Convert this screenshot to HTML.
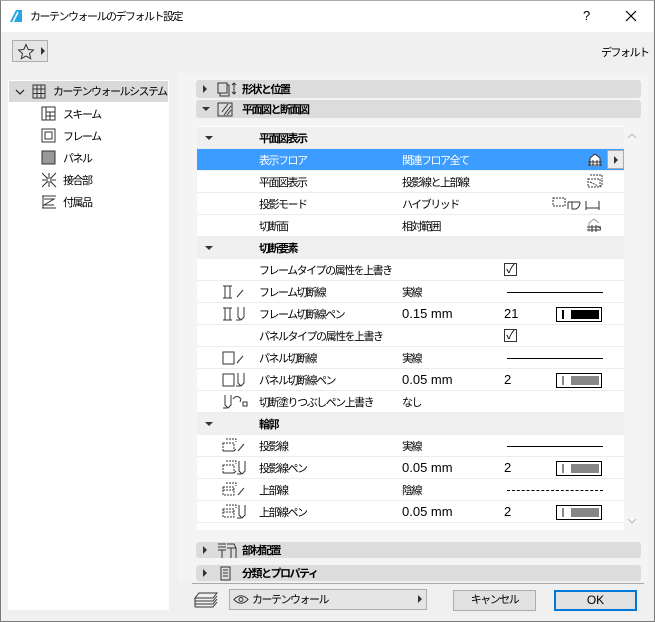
<!DOCTYPE html>
<html><head><meta charset="utf-8"><style>
*{margin:0;padding:0;box-sizing:border-box}
body{width:655px;height:622px;overflow:hidden;background:#f0f0f0;font-family:"Liberation Sans","Noto Sans CJK JP",sans-serif;font-size:11px;letter-spacing:-1.5px;color:#000;position:relative;white-space:nowrap}
.a{position:absolute}
.L{font-size:13px;letter-spacing:0}
.win{left:0;top:0;width:655px;height:622px;border:1px solid #7a7a7a;border-top:1px solid #aaa}
.title{left:1px;top:1px;width:652px;height:31px;background:#fff}
.sec{left:196px;width:445px;height:18px;background:#dcdcdc;border-radius:3px;font-weight:bold}
.sec span{position:absolute;top:2px}
.row{left:197px;width:427px;height:22px;background:#fff;border-bottom:1px solid #ececec}
.row.h{background:#f0f0f0;font-weight:bold}
.row.sel{background:#3c9cff;color:#fff}
.row span{position:absolute;top:3px}
.row span.L{top:3px}
.c1{left:62px}.c2{left:205px}.c3{left:307px}
.sw{position:absolute;left:359px;top:4px;width:46px;height:15px;border:1px solid #000;background:#fff}
.sw i{position:absolute;left:5px;top:2px;width:2px;height:9px;background:#888}
.sw b{position:absolute;left:14px;top:2px;width:28px;height:9px;background:#878787}
.ln{position:absolute;left:310px;top:11px;width:96px;border-top:1px solid #000}
.chk{position:absolute;left:307px;top:4px;width:13px;height:13px;border:1px solid #333;font-size:12px;line-height:11px;text-align:center;font-weight:normal;letter-spacing:0}
.tri{position:absolute;left:8px;top:9px;width:0;height:0;border-left:4px solid transparent;border-right:4px solid transparent;border-top:4px solid #333}
.trr{position:absolute;width:0;height:0;border-top:4px solid transparent;border-bottom:4px solid transparent;border-left:4px solid #333}
.ic{position:absolute;left:25px;top:3px}
.btn{background:#e1e1e1;border:1px solid #adadad;text-align:center;line-height:19px}
</style></head><body>
<div class="a win"></div>
<div class="a title"></div>
<svg class="a" style="left:9px;top:9px" width="14" height="14"><path d="M1 13 L7 1 L13 1 L13 13 Z" fill="#29a6e0"/><path d="M4 13 L9 3" stroke="#fff" stroke-width="1.5"/></svg>
<div class="a" style="left:30px;top:8px">カーテンウォールのデフォルト設定</div>
<div class="a L" style="left:583px;top:8px">?</div>
<svg class="a" style="left:625px;top:10px" width="12" height="12"><path d="M1 1L11 11M11 1L1 11" stroke="#000" stroke-width="1.2"/></svg>
<div class="a" style="left:12px;top:40px;width:36px;height:22px;border:1px solid #adadad;background:#e5e5e5"></div>
<svg class="a" style="left:17px;top:43px" width="18" height="17"><path d="M9 1.5L11.2 6.5L16.5 7L12.5 10.5L13.7 15.7L9 13L4.3 15.7L5.5 10.5L1.5 7L6.8 6.5Z" fill="none" stroke="#333"/></svg>
<div class="a trr" style="left:41px;top:47px"></div>
<div class="a" style="left:601px;top:44px">デフォルト</div>
<div class="a" style="left:8px;top:80px;width:161px;height:530px;background:#fff"></div>
<div class="a" style="left:9px;top:81px;width:159px;height:21px;background:#d9d9d9"></div>
<svg class="a" style="left:15px;top:88px" width="10" height="8"><path d="M1 2L5 6L9 2" fill="none" stroke="#333" stroke-width="1.3"/></svg>
<svg class="a" style="left:31px;top:84px" width="16" height="15"><path d="M2 1H14V14H2ZM2 5H14M2 9.5H14M6 1V14M10 1V14" fill="none" stroke="#333"/></svg>
<div class="a" style="left:53px;top:83px">カーテンウォールシステム</div>
<svg class="a" style="left:41px;top:106px" width="15" height="15"><path d="M1 1H14V14H1ZM5 1V14M5 6H14M9 6V14M5 10H14" fill="none" stroke="#333"/></svg>
<div class="a" style="left:63px;top:106px">スキーム</div>
<svg class="a" style="left:41px;top:128px" width="15" height="15"><path d="M1 1H14V14H1ZM4 4H11V11H4Z" fill="none" stroke="#333"/></svg>
<div class="a" style="left:63px;top:128px">フレーム</div>
<svg class="a" style="left:41px;top:150px" width="15" height="15"><path d="M1 1H14V14H1Z" fill="#999" stroke="#333"/></svg>
<div class="a" style="left:63px;top:150px">パネル</div>
<svg class="a" style="left:41px;top:172px" width="16" height="16"><path d="M1 1L6 6M15 1L10 6M1 15L6 10M15 15L10 10M8 1V5M8 11V15M1 8H5M11 8H15" stroke="#333"/><rect x="6" y="6" width="4" height="4" fill="none" stroke="#333"/></svg>
<div class="a" style="left:63px;top:172px">接合部</div>
<svg class="a" style="left:41px;top:194px" width="16" height="16"><path d="M1 2H15M1 14H15M3 5H13L3 11H13M2 2V14" fill="none" stroke="#333"/></svg>
<div class="a" style="left:63px;top:194px">付属品</div>

<div class="a" style="left:178px;top:73px;width:470px;height:508px;background:#f4f4f4"></div>
<div class="a sec" style="top:80px"><div class="trr" style="left:7px;top:5px"></div>
<svg class="a" style="left:21px;top:1px" width="22" height="16"><path d="M1 2H10V12H1ZM3 12V15H12V4H10" fill="none" stroke="#333"/><path d="M17 2V13M15 4L17 2L19 4M15 11L17 13L19 11" fill="none" stroke="#333"/></svg>
<span style="left:46px;top:1px">形状と位置</span></div>
<div class="a sec" style="top:100px"><div class="tri" style="left:6px;top:7px"></div>
<svg class="a" style="left:21px;top:2px" width="18" height="16"><path d="M1 1H15V14H1Z" fill="none" stroke="#333"/><path d="M7 13L14 4M10 13L14 8M5 10L11 2" stroke="#333"/></svg>
<span style="left:46px;top:1px">平面図と断面図</span></div>

<div class="a" style="left:197px;top:126px;width:427px;height:404px;background:#fff"></div>
<div class="a row h" style="top:127px"><div class="tri"></div><span class="c1">平面図表示</span></div>
<div class="a row sel" style="top:149px"><span class="c1">表示フロア</span><span class="c2">関連フロア全て</span>
<svg class="a" style="left:391px;top:4px" width="14" height="14"><path d="M2 13V5L7 1L12 5V13" fill="#fff" stroke="#333"/><path d="M0 9H14M0 12H14M5 7V13M9 7V13" stroke="#333"/></svg>
<div class="a" style="left:410px;top:1px;width:17px;height:19px;background:#ececec;border:1px solid #aaa"><div class="trr" style="left:6px;top:5px"></div></div></div>
<div class="a row" style="top:171px"><span class="c1">平面図表示</span><span class="c2">投影線と上部線</span>
<svg class="a" style="left:390px;top:3px" width="16" height="15"><path d="M3 1H15V5M1 5H13V13H1ZM13 13L15 11V5M3 8L11 12" fill="none" stroke="#333" stroke-dasharray="2 1"/></svg></div>
<div class="a row" style="top:193px"><span class="c1">投影モード</span><span class="c2">ハイブリッド</span>
<svg class="a" style="left:355px;top:4px" width="52" height="14"><path d="M1 1H13V9H1Z" fill="none" stroke="#333" stroke-dasharray="2 1"/><path d="M16 5V12M16 5H28M20 5V12L24 12Q28 10 28 5M34 4V13M34 11H47M47 4V13" fill="none" stroke="#333"/></svg></div>
<div class="a row" style="top:215px"><span class="c1">切断面</span><span class="c2">相対範囲</span>
<svg class="a" style="left:390px;top:3px" width="16" height="15"><path d="M2 14V5L7 1L12 5" fill="none" stroke="#999"/><path d="M0 9H14M0 12H14M5 7V14M9 7V14M11 8L14 11" stroke="#333"/></svg></div>
<div class="a row h" style="top:237px"><div class="tri"></div><span class="c1">切断要素</span></div>
<div class="a row" style="top:259px"><span class="c1">フレームタイプの属性を上書き</span><div class="chk">✓</div></div>
<div class="a row" style="top:281px"><svg class="ic" width="32" height="16"><path d="M1 2H10M1 14H10M3 2V14M8 2V14M15 13L21 6" fill="none" stroke="#333"/></svg><span class="c1">フレーム切断線</span><span class="c2">実線</span><div class="ln"></div></div>
<div class="a row" style="top:303px"><svg class="ic" width="32" height="16"><path d="M1 2H10M1 14H10M3 2V14M8 2V14M16 1V11L19 14L22 11V1M14 14H18" fill="none" stroke="#333"/></svg><span class="c1">フレーム切断線ペン</span><span class="c2 L">0.15 mm</span><span class="c3 L">21</span><div class="sw"><i style="background:#000"></i><b style="background:#000"></b></div></div>
<div class="a row" style="top:325px"><span class="c1">パネルタイプの属性を上書き</span><div class="chk">✓</div></div>
<div class="a row" style="top:347px"><svg class="ic" width="32" height="16"><path d="M1 2H12V14H1ZM15 13L21 6" fill="none" stroke="#333"/></svg><span class="c1">パネル切断線</span><span class="c2">実線</span><div class="ln"></div></div>
<div class="a row" style="top:369px"><svg class="ic" width="32" height="16"><path d="M1 2H12V14H1ZM16 1V11L19 14L22 11V1M14 14H18" fill="none" stroke="#333"/></svg><span class="c1">パネル切断線ペン</span><span class="c2 L">0.05 mm</span><span class="c3 L">2</span><div class="sw"><i></i><b></b></div></div>
<div class="a row" style="top:391px"><svg class="ic" width="34" height="16"><path d="M3 1V11L6 14L9 11V1M1 14H5M11 5Q15 0 19 5L18 8M21 8H25V12H21Z" fill="none" stroke="#333"/></svg><span class="c1">切断塗りつぶしペン上書き</span><span class="c2">なし</span></div>
<div class="a row h" style="top:413px"><div class="tri"></div><span class="c1">輪郭</span></div>
<div class="a row" style="top:435px"><svg class="ic" width="32" height="16"><path d="M4 1H14V4M1 5H12V13H1Z" fill="none" stroke="#333" stroke-dasharray="2 1"/><path d="M1 13H12L14 11M16 13L22 6" fill="none" stroke="#333"/></svg><span class="c1">投影線</span><span class="c2">実線</span><div class="ln"></div></div>
<div class="a row" style="top:457px"><svg class="ic" width="32" height="16"><path d="M4 1H14V4M1 5H12V13H1Z" fill="none" stroke="#333" stroke-dasharray="2 1"/><path d="M1 13H12L14 11M17 1V11L20 14L23 11V1M15 14H19" fill="none" stroke="#333"/></svg><span class="c1">投影線ペン</span><span class="c2 L">0.05 mm</span><span class="c3 L">2</span><div class="sw"><i></i><b></b></div></div>
<div class="a row" style="top:479px"><svg class="ic" width="32" height="16"><path d="M4 1H14V4M1 5H12V13H1ZM1 8H12" fill="none" stroke="#333" stroke-dasharray="2 1"/><path d="M16 13L22 6" stroke="#333"/></svg><span class="c1">上部線</span><span class="c2">陰線</span><div class="ln" style="border-top:1px dashed #000"></div></div>
<div class="a row" style="top:501px"><svg class="ic" width="32" height="16"><path d="M4 1H14V4M1 5H12V13H1ZM1 8H12" fill="none" stroke="#333" stroke-dasharray="2 1"/><path d="M17 1V11L20 14L23 11V1M15 14H19" fill="none" stroke="#333"/></svg><span class="c1">上部線ペン</span><span class="c2 L">0.05 mm</span><span class="c3 L">2</span><div class="sw"><i></i><b></b></div></div>
<svg class="a" style="left:627px;top:133px" width="10" height="6"><path d="M1 5L5 1L9 5" fill="none" stroke="#bbb"/></svg>
<svg class="a" style="left:627px;top:518px" width="10" height="6"><path d="M1 1L5 5L9 1" fill="none" stroke="#bbb"/></svg>

<div class="a sec" style="top:542px;height:16px"><div class="trr" style="left:7px;top:4px"></div>
<svg class="a" style="left:21px;top:0px" width="20" height="16"><path d="M1 2H9M1 5H9M1 8H9M5 8V16M10 2L17 2L19 6V16M14 6V16M10 6H19" fill="none" stroke="#333"/></svg>
<span style="left:46px;top:0px">部材配置</span></div>
<div class="a sec" style="top:565px;height:16px"><div class="trr" style="left:7px;top:4px"></div>
<svg class="a" style="left:23px;top:1px" width="14" height="15"><path d="M2 1H11V14H2ZM4 4H9M4 7H9M4 10H9" fill="none" stroke="#333"/></svg>
<span style="left:46px;top:0px">分類とプロパティ</span></div>
<div class="a" style="left:192px;top:583px;width:452px;border-top:1px solid #aaa"></div>
<svg class="a" style="left:194px;top:592px" width="24" height="16"><path d="M5 1H23L19 6H1ZM1 9H19L23 4M1 12H19L23 7M1 15H19L23 10M1 6V15" fill="none" stroke="#333"/></svg>
<div class="a" style="left:229px;top:589px;width:198px;height:21px;border:1px solid #adadad;background:#e5e5e5"></div>
<svg class="a" style="left:233px;top:594px" width="16" height="11"><path d="M1 5.5Q8 -2 15 5.5Q8 13 1 5.5Z" fill="none" stroke="#333"/><circle cx="8" cy="5.5" r="2" fill="none" stroke="#333"/></svg>
<div class="a" style="left:252px;top:591px">カーテンウォール</div>
<div class="a trr" style="left:418px;top:595px"></div>
<div class="a btn" style="left:453px;top:590px;width:83px;height:21px">キャンセル</div>
<div class="a btn L" style="left:554px;top:590px;width:83px;height:21px;border:2px solid #0078d7;line-height:17px;font-size:12px">OK</div>
</body></html>
